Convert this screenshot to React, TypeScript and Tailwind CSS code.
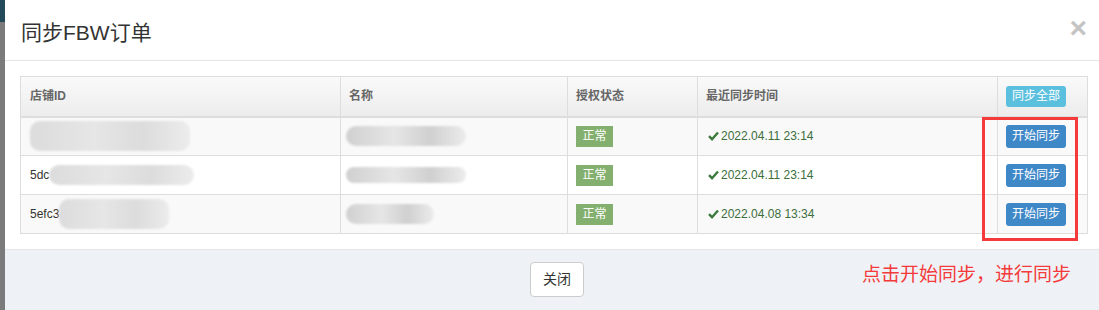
import React from "react";

const font = { fontFamily: '"Liberation Sans", "Noto Sans CJK SC", sans-serif' };

function Blob({ w, h = 24, tone = "#d9d9d9" }: { w: number; h?: number; tone?: string }) {
  return (
    <div
      className="rounded-[10px]"
      style={{
        width: w,
        height: h,
        background: `linear-gradient(90deg, ${tone}, #e6e6e6 40%, ${tone} 70%, #ececec)`,
        filter: "blur(1px)",
      }}
    />
  );
}

function SyncBtn() {
  return (
    <button className="h-[23px] w-[60px] rounded-[3px] bg-[#3f88c8] text-[12px] text-white leading-[23px]">
      开始同步
    </button>
  );
}

function Badge() {
  return (
    <span className="inline-block h-[21px] w-[37px] bg-[#84b06f] text-center text-[12px] leading-[21px] text-white">
      正常
    </span>
  );
}

function DateCell({ d }: { d: string }) {
  return (
    <span className="flex items-center gap-[2px] text-[12px] text-[#3c6e3c]">
      <svg width="11" height="10" viewBox="0 0 11 10">
        <path d="M1 5.2 L4 8.2 L10 1.5" stroke="#3c7a3c" strokeWidth="2.4" fill="none" />
      </svg>
      {d}
    </span>
  );
}

export default function App() {
  const rows = [
    { id: "", idBlob: 160, nameBlob: 120, date: "2022.04.11 23:14", bg: "bg-[#f9f9f9]" },
    { id: "5dc", idBlob: 145, nameBlob: 120, date: "2022.04.11 23:14", bg: "bg-white" },
    { id: "5efc3", idBlob: 110, nameBlob: 88, date: "2022.04.08 13:34", bg: "bg-[#f9f9f9]" },
  ];
  return (
    <div className="flex h-[310px] w-[1099px] overflow-hidden" style={font}>
      <div className="flex w-[5px] shrink-0 flex-col">
        <div className="h-[22px] bg-[#23495a]" />
        <div className="flex-1 bg-[#7b7b7b]" />
      </div>
      <div className="relative flex w-[1094px] shrink-0 flex-col bg-white">
        <div className="flex h-[61px] items-center justify-between border-b border-[#e5e5e5] pl-[16px] pr-[12px]">
          <h1 className="mt-[4px] text-[21px] text-[#333] leading-none">同步FBW订单</h1>
          <span className="mt-[-4px] text-[30px] font-bold leading-none text-[#c4c4c4]" style={{ fontFamily: '"Liberation Sans", sans-serif' }}>
            ×
          </span>
        </div>
        <div className="pl-[15px] pr-[12px] pt-[15px] pb-[15px]">
          <table className="w-[1067px] table-fixed border-collapse border border-[#dddddd] text-[12px] text-[#333]">
            <colgroup>
              <col className="w-[320px]" />
              <col className="w-[227px]" />
              <col className="w-[130px]" />
              <col className="w-[300px]" />
              <col className="w-[90px]" />
            </colgroup>
            <thead>
              <tr className="h-[40px] bg-gradient-to-b from-[#fafafa] to-[#ececec] text-left text-[#666]">
                <th className="border border-b-2 border-[#dddddd] pl-[9px] font-semibold">店铺ID</th>
                <th className="border border-b-2 border-[#dddddd] pl-[8px] font-semibold">名称</th>
                <th className="border border-b-2 border-[#dddddd] pl-[8px] font-semibold">授权状态</th>
                <th className="border border-b-2 border-[#dddddd] pl-[8px] font-semibold">最近同步时间</th>
                <th className="border border-b-2 border-[#dddddd] pl-[8px] font-normal">
                  <span className="inline-block h-[21px] w-[60px] rounded-[3px] bg-[#5bc0de] text-center text-[12px] leading-[21px] text-white">
                    同步全部
                  </span>
                </th>
              </tr>
            </thead>
            <tbody>
              {rows.map((r, i) => (
                <tr key={i} className={`h-[39px] ${r.bg}`}>
                  <td className="border border-[#dddddd] pl-[9px]">
                    <div className="flex items-center">
                      {r.id && <span>{r.id}</span>}
                      <Blob w={r.idBlob} h={i === 0 ? 30 : i === 2 ? 30 : 20} tone="#dcdcdc" />
                    </div>
                  </td>
                  <td className="border border-[#dddddd] pl-[5px]">
                    <Blob w={r.nameBlob} h={i === 1 ? 16 : 20} tone="#d0d0d0" />
                  </td>
                  <td className="border border-[#dddddd] pl-[8px]">
                    <Badge />
                  </td>
                  <td className="border border-[#dddddd] pl-[10px]">
                    <DateCell d={r.date} />
                  </td>
                  <td className="border border-[#dddddd] pl-[8px]">
                    <SyncBtn />
                  </td>
                </tr>
              ))}
            </tbody>
          </table>
        </div>
        <div className="relative flex flex-1 justify-center border-t border-[#e5e5e5] bg-[#eef1f6] pt-[12px]">
          <button className="ml-[10px] h-[35px] w-[54px] rounded-[4px] border border-[#cccccc] bg-white text-[14px] text-[#333]">
            关闭
          </button>
          <span className="absolute left-[857px] top-[11px] text-[19px] text-[#f43a3a]">点击开始同步，进行同步</span>
        </div>
        <div className="pointer-events-none absolute left-[977px] top-[117px] h-[124px] w-[96px] border-[3px] border-[#f43a3a]" />
      </div>
    </div>
  );
}
